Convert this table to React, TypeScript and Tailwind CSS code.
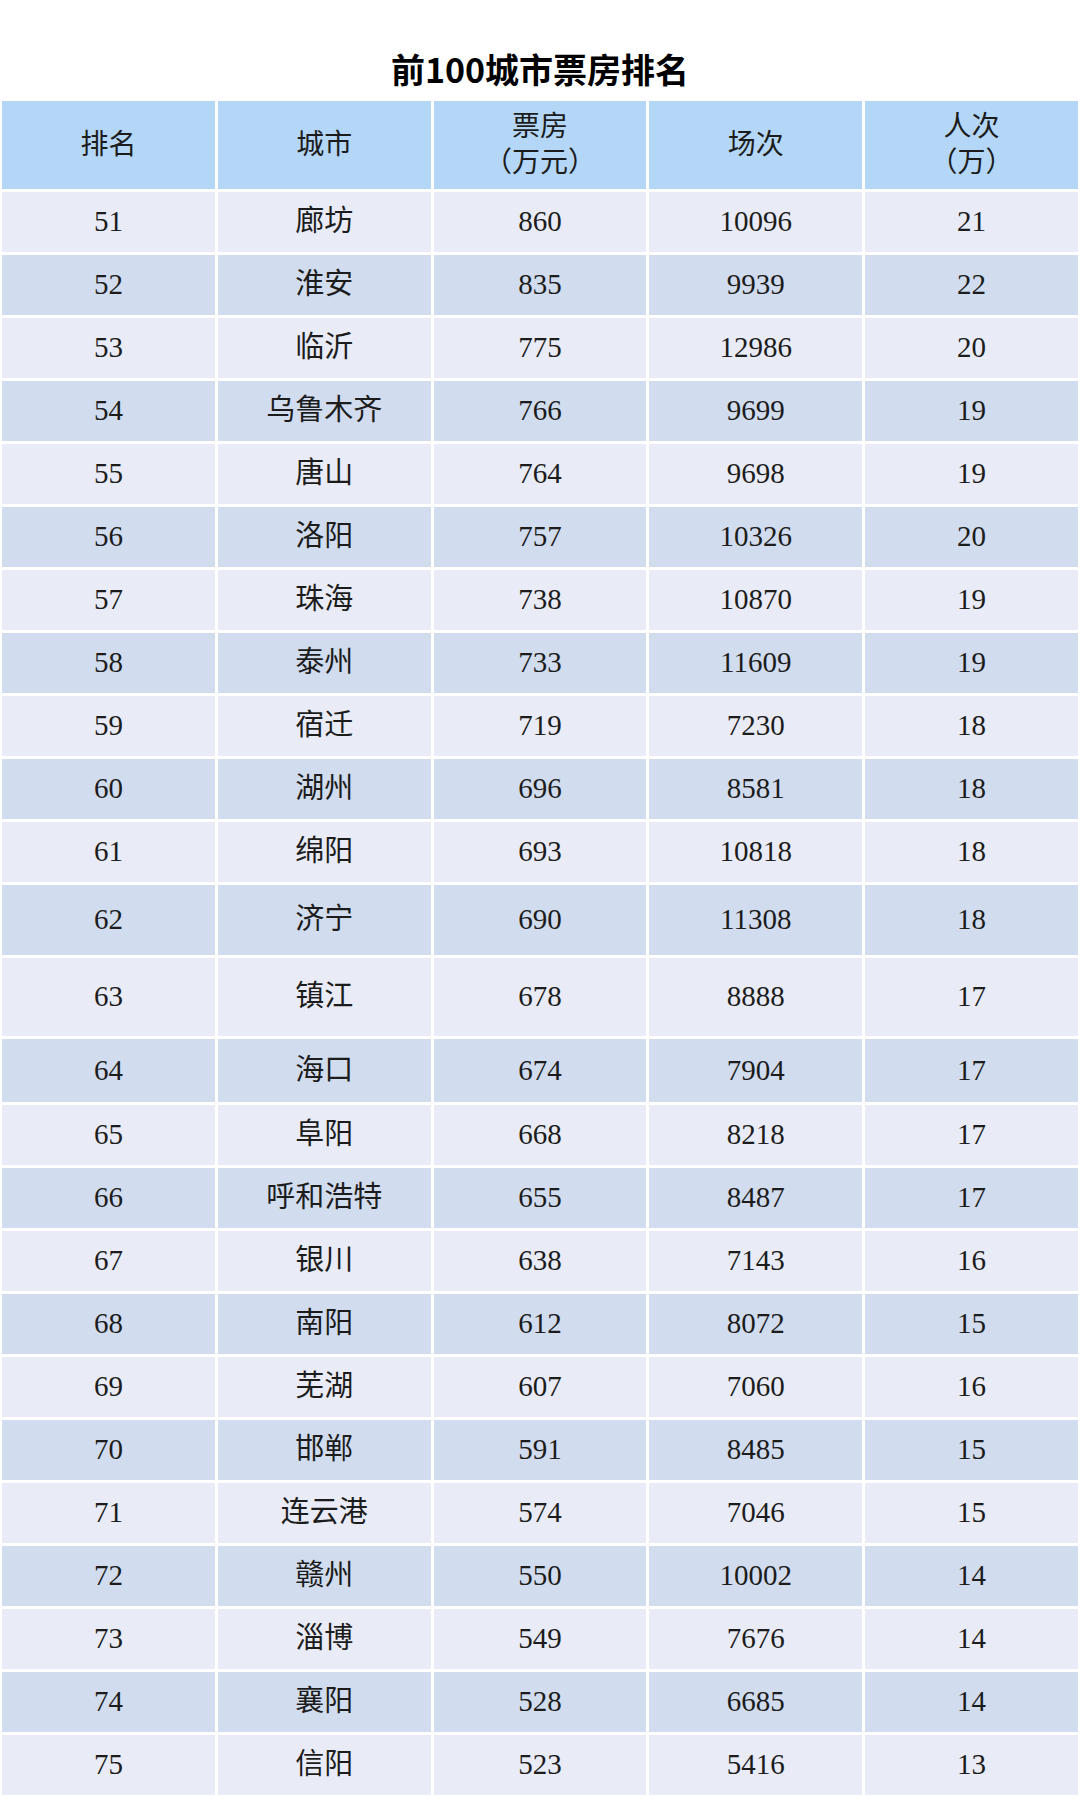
type Row = {
  rank: number;
  city: string;
  box: number;
  shows: number;
  people: number;
  h?: string;
};

const rows: Row[] = [
  { rank: 51, city: "廊坊", box: 860, shows: 10096, people: 21 },
  { rank: 52, city: "淮安", box: 835, shows: 9939, people: 22 },
  { rank: 53, city: "临沂", box: 775, shows: 12986, people: 20 },
  { rank: 54, city: "乌鲁木齐", box: 766, shows: 9699, people: 19 },
  { rank: 55, city: "唐山", box: 764, shows: 9698, people: 19 },
  { rank: 56, city: "洛阳", box: 757, shows: 10326, people: 20 },
  { rank: 57, city: "珠海", box: 738, shows: 10870, people: 19 },
  { rank: 58, city: "泰州", box: 733, shows: 11609, people: 19 },
  { rank: 59, city: "宿迁", box: 719, shows: 7230, people: 18 },
  { rank: 60, city: "湖州", box: 696, shows: 8581, people: 18 },
  { rank: 61, city: "绵阳", box: 693, shows: 10818, people: 18 },
  { rank: 62, city: "济宁", box: 690, shows: 11308, people: 18, h: "h-[70px]" },
  { rank: 63, city: "镇江", box: 678, shows: 8888, people: 17, h: "h-[78px]" },
  { rank: 64, city: "海口", box: 674, shows: 7904, people: 17, h: "h-[63px]" },
  { rank: 65, city: "阜阳", box: 668, shows: 8218, people: 17 },
  { rank: 66, city: "呼和浩特", box: 655, shows: 8487, people: 17 },
  { rank: 67, city: "银川", box: 638, shows: 7143, people: 16 },
  { rank: 68, city: "南阳", box: 612, shows: 8072, people: 15 },
  { rank: 69, city: "芜湖", box: 607, shows: 7060, people: 16 },
  { rank: 70, city: "邯郸", box: 591, shows: 8485, people: 15 },
  { rank: 71, city: "连云港", box: 574, shows: 7046, people: 15 },
  { rank: 72, city: "赣州", box: 550, shows: 10002, people: 14 },
  { rank: 73, city: "淄博", box: 549, shows: 7676, people: 14 },
  { rank: 74, city: "襄阳", box: 528, shows: 6685, people: 14 },
  { rank: 75, city: "信阳", box: 523, shows: 5416, people: 13 },
];

const serif = "font-['Liberation_Serif','Noto_Sans_CJK_SC',serif]";

function HeadCell({ lines }: { lines: string[] }) {
  return (
    <div className="flex flex-col items-center justify-center bg-[#b4d7f8] leading-[1.3]">
      {lines.map((l) => (
        <span key={l}>{l}</span>
      ))}
    </div>
  );
}

export default function App() {
  return (
    <div className={`w-[1080px] bg-white text-[#1c1c1c] ${serif}`}>
      <div className="flex h-[101px] items-end justify-center pb-[15px]">
        <h1 className="font-['Noto_Sans_CJK_SC',sans-serif] text-[34px] font-bold leading-none text-black">
          前100城市票房排名
        </h1>
      </div>
      <div className="flex flex-col gap-[3px] px-[2px] text-[29px]">
        <div className="grid h-[88px] grid-cols-5 gap-x-[3px] text-[28px]">
          <HeadCell lines={["排名"]} />
          <HeadCell lines={["城市"]} />
          <HeadCell lines={["票房", "（万元）"]} />
          <HeadCell lines={["场次"]} />
          <HeadCell lines={["人次", "（万）"]} />
        </div>
        {rows.map((r, i) => {
          const bg = i % 2 === 0 ? "bg-[#e9ecf6]" : "bg-[#d1ddef]";
          return (
            <div key={r.rank} className={`grid grid-cols-5 gap-x-[3px] ${r.h ?? "h-[60px]"}`}>
              <div className={`flex items-center justify-center ${bg}`}>{r.rank}</div>
              <div className={`flex items-center justify-center ${bg}`}>{r.city}</div>
              <div className={`flex items-center justify-center ${bg}`}>{r.box}</div>
              <div className={`flex items-center justify-center ${bg}`}>{r.shows}</div>
              <div className={`flex items-center justify-center ${bg}`}>{r.people}</div>
            </div>
          );
        })}
      </div>
    </div>
  );
}
